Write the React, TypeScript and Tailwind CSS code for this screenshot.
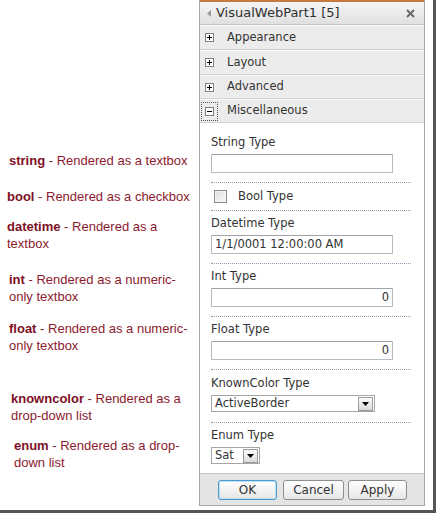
import React from "react";

/* ── Left-hand notes ──────────────────────────────────────────── */

type Note = { key: string; lines: string[]; mt: string; ml: string };

const notes: Note[] = [
  { key: "string", lines: ["Rendered as a textbox"], mt: "mt-[152px]", ml: "ml-[9px]" },
  { key: "bool", lines: ["Rendered as a checkbox"], mt: "mt-[19px]", ml: "ml-[7px]" },
  { key: "datetime", lines: ["Rendered as a", "textbox"], mt: "mt-[13px]", ml: "ml-[7px]" },
  { key: "int", lines: ["Rendered as a numeric-", "only textbox"], mt: "mt-[19px]", ml: "ml-[9px]" },
  { key: "float", lines: ["Rendered as a numeric-", "only textbox"], mt: "mt-[15px]", ml: "ml-[9px]" },
  { key: "knowncolor", lines: ["Rendered as a", "drop-down list"], mt: "mt-[36px]", ml: "ml-[11px]" },
  { key: "enum", lines: ["Rendered as a drop-", "down list"], mt: "mt-[13px]", ml: "ml-[14px]" },
];

/* ── Small pieces ─────────────────────────────────────────────── */

function ExpandBox({ open }: { open?: boolean }) {
  return (
    <span className="flex h-[9px] w-[9px] items-center justify-center border border-[#7f7f7f] bg-white">
      <svg width="7" height="7" viewBox="0 0 7 7">
        <rect x="1" y="3" width="5" height="1" fill="#000" />
        {!open && <rect x="3" y="1" width="1" height="5" fill="#000" />}
      </svg>
    </span>
  );
}

function Category({ label, open, h }: { label: string; open?: boolean; h: string }) {
  return (
    <div className={`flex ${h} items-center border-b border-[#d3d3d3] border-t border-t-[#fafafa] bg-[#ececec]`}>
      {open ? (
        <span className="ml-[1px] flex h-[19px] w-[17px] items-center justify-center border border-dotted border-[#555]">
          <ExpandBox open />
        </span>
      ) : (
        <span className="ml-[5px] w-[13px]">
          <ExpandBox />
        </span>
      )}
      <span className="ml-[9px]">{label}</span>
    </div>
  );
}

function TextBox({ value, right }: { value?: string; right?: boolean }) {
  return (
    <div
      className={`flex h-[19px] w-[182px] items-center rounded-[1px] border border-[#b7bbc1] border-t-[#9da2a8] bg-white px-[3px] ${
        right ? "justify-end" : ""
      }`}
    >
      {value}
    </div>
  );
}

function DropButton() {
  return (
    <span className="ml-auto mr-[1px] flex h-[14px] w-[15px] items-center justify-center border border-[#9a9a9a] bg-gradient-to-b from-[#fbfbfb] to-[#dcdcdc]">
      <svg width="7" height="4" viewBox="0 0 7 4">
        <path d="M0 0h7L3.5 4z" fill="#000" />
      </svg>
    </span>
  );
}

function Select({ value, w }: { value: string; w: string }) {
  return (
    <div className={`flex h-[17px] ${w} items-center border border-[#a5a5a5] bg-white pl-[3px]`}>
      <span>{value}</span>
      <DropButton />
    </div>
  );
}

function Field({ label, children, pt, pb }: { label: string; children: React.ReactNode; pt: string; pb: string }) {
  return (
    <div className={`border-b border-dotted border-[#8f9bb3] ${pt} ${pb}`}>
      <div className="h-[16px] leading-[16px]">{label}</div>
      <div className="mt-[4px]">{children}</div>
    </div>
  );
}

function Button({ label, w, primary }: { label: string; w: string; primary?: boolean }) {
  return (
    <div
      className={`flex h-[20px] ${w} items-center justify-center rounded-[3px] border bg-gradient-to-b from-[#ffffff] to-[#e6e6e6] text-[12px] ${
        primary ? "border-[#4c9bd0] shadow-[inset_0_0_0_1px_#bfe0f3]" : "border-[#8e8e8e]"
      }`}
    >
      {label}
    </div>
  );
}

/* ── App ──────────────────────────────────────────────────────── */

export default function App() {
  return (
    <div className="h-[516px] w-[438px] bg-white">
      <div className="flex h-[513px] w-[436px] border-b-[3px] border-r-[3px] border-[#555] bg-white">
        {/* notes */}
        <div
          className="flex w-[199px] flex-col text-[13px] leading-[17px] text-[#8c1a2e]"
          style={{ fontFamily: '"Liberation Sans", Arial, sans-serif' }}
        >
          {notes.map((n) => (
            <div key={n.key} className={`${n.mt} ${n.ml} whitespace-nowrap`}>
              <div>
                <b className="text-[#7d1024]">{n.key}</b> - {n.lines[0]}
              </div>
              {n.lines[1] && <div>{n.lines[1]}</div>}
            </div>
          ))}
        </div>

        {/* tool pane */}
        <div
          className="flex h-[506px] w-[226px] flex-col border-x border-b border-[#a7a7a7] text-[11.5px] text-[#333]"
          style={{ fontFamily: '"DejaVu Sans", Verdana, sans-serif' }}
        >
          <div className="flex h-[25px] items-center border-b border-t-2 border-b-[#c4c4c4] border-t-[#c7793d] bg-gradient-to-b from-[#f5f5f5] to-[#e0e0e0]">
            <svg className="ml-[7px]" width="4" height="7" viewBox="0 0 4 7">
              <path d="M4 0v7L0 3.5z" fill="#9a9a9a" />
            </svg>
            <span className="ml-[5px] text-[13px] text-[#2f2f2f]">VisualWebPart1 [5]</span>
            <svg className="ml-auto mr-[9px]" width="9" height="9" viewBox="0 0 9 9">
              <path d="M1 1l7 7M8 1L1 8" stroke="#6a6a6a" strokeWidth="2" />
            </svg>
          </div>

          <Category label="Appearance" h="h-[25px]" />
          <Category label="Layout" h="h-[25px]" />
          <Category label="Advanced" h="h-[24px]" />
          <Category label="Miscellaneous" open h="h-[24px]" />

          <div className="flex-1 bg-white pl-[11px] pr-[13px]">
            <Field label="String Type" pt="pt-[11px]" pb="pb-[9px]">
              <TextBox />
            </Field>

            <div className="flex h-[28px] items-center border-b border-dotted border-[#8f9bb3]">
              <span className="ml-[3px] h-[13px] w-[13px] border border-[#8a8a8a] bg-gradient-to-br from-[#dcdcdc] to-[#fafafa] shadow-[inset_0_0_0_1px_#f4f4f4]" />
              <span className="ml-[11px]">Bool Type</span>
            </div>

            <Field label="Datetime Type" pt="pt-[4px]" pb="pb-[9px]">
              <TextBox value="1/1/0001 12:00:00 AM" />
            </Field>
            <Field label="Int Type" pt="pt-[4px]" pb="pb-[9px]">
              <TextBox value="0" right />
            </Field>
            <Field label="Float Type" pt="pt-[4px]" pb="pb-[9px]">
              <TextBox value="0" right />
            </Field>
            <Field label="KnownColor Type" pt="pt-[5px]" pb="pb-[10px]">
              <Select value="ActiveBorder" w="w-[164px]" />
            </Field>
            <div className="pt-[4px]">
              <div className="h-[16px] leading-[16px]">Enum Type</div>
              <div className="mt-[4px]">
                <Select value="Sat" w="w-[49px]" />
              </div>
            </div>
          </div>

          <div className="flex h-[32px] border-t border-[#c2c2c2] bg-[#e4e4e4] pl-[18px] pt-[6px]">
            <Button label="OK" w="w-[59px]" primary />
            <div className="ml-[6px]">
              <Button label="Cancel" w="w-[61px]" />
            </div>
            <div className="ml-[4px]">
              <Button label="Apply" w="w-[59px]" />
            </div>
          </div>
        </div>
      </div>
    </div>
  );
}
